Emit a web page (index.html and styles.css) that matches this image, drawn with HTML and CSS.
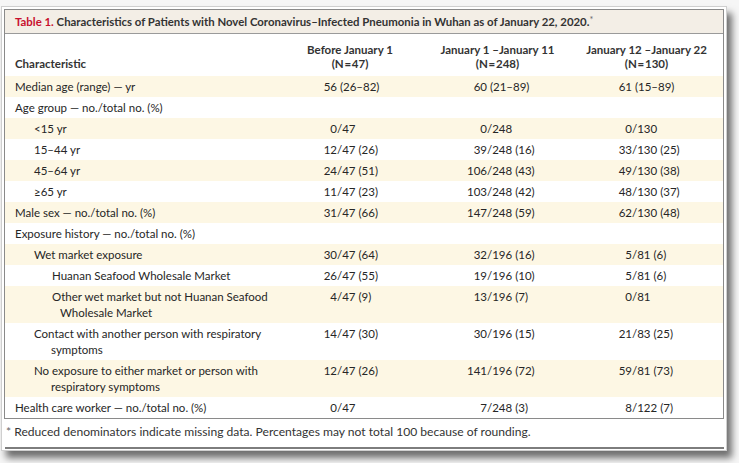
FILE: index.html
```html
<!DOCTYPE html>
<html lang="en">
<head>
<meta charset="utf-8">
<title>Table 1</title>
<link rel="stylesheet" href="styles.css">
</head>
<body>
<div class="card">
  <div class="box">
    <div class="title"><span class="tnum">Table 1.</span> Characteristics of Patients with Novel Coronavirus–Infected Pneumonia in Wuhan as of January 22, 2020.<sup>*</sup></div>
    <table class="data">
      <colgroup>
        <col class="c-label">
        <col class="c-v1">
        <col class="c-v2">
        <col class="c-v3">
      </colgroup>
      <thead>
        <tr>
          <th class="lbl">Characteristic</th>
          <th>Before January 1<br>(N&#8202;=&#8202;47)</th>
          <th>January 1 –January 11<br>(N&#8202;=&#8202;248)</th>
          <th>January 12 –January 22<br>(N&#8202;=&#8202;130)</th>
        </tr>
      </thead>
      <tbody>
        <tr class="alt">
          <td class="l0">Median age (range) — yr</td>
          <td><span class="n">56</span> (26–82)</td>
          <td><span class="n">60</span> (21–89)</td>
          <td><span class="n">61</span> (15–89)</td>
        </tr>
        <tr>
          <td class="l0">Age group — no./total no. (%)</td>
          <td></td><td></td><td></td>
        </tr>
        <tr class="alt">
          <td class="l1">&lt;15 yr</td>
          <td><span class="n">0</span>/47</td>
          <td><span class="n">0</span>/248</td>
          <td><span class="n">0</span>/130</td>
        </tr>
        <tr>
          <td class="l1">15–44 yr</td>
          <td><span class="n">12</span>/47 (26)</td>
          <td><span class="n">39</span>/248 (16)</td>
          <td><span class="n">33</span>/130 (25)</td>
        </tr>
        <tr class="alt">
          <td class="l1">45–64 yr</td>
          <td><span class="n">24</span>/47 (51)</td>
          <td><span class="n">106</span>/248 (43)</td>
          <td><span class="n">49</span>/130 (38)</td>
        </tr>
        <tr>
          <td class="l1">≥65 yr</td>
          <td><span class="n">11</span>/47 (23)</td>
          <td><span class="n">103</span>/248 (42)</td>
          <td><span class="n">48</span>/130 (37)</td>
        </tr>
        <tr class="alt">
          <td class="l0">Male sex — no./total no. (%)</td>
          <td><span class="n">31</span>/47 (66)</td>
          <td><span class="n">147</span>/248 (59)</td>
          <td><span class="n">62</span>/130 (48)</td>
        </tr>
        <tr>
          <td class="l0">Exposure history — no./total no. (%)</td>
          <td></td><td></td><td></td>
        </tr>
        <tr class="alt">
          <td class="l1">Wet market exposure</td>
          <td><span class="n">30</span>/47 (64)</td>
          <td><span class="n">32</span>/196 (16)</td>
          <td><span class="n">5</span>/81 (6)</td>
        </tr>
        <tr>
          <td class="l2">Huanan Seafood Wholesale Market</td>
          <td><span class="n">26</span>/47 (55)</td>
          <td><span class="n">19</span>/196 (10)</td>
          <td><span class="n">5</span>/81 (6)</td>
        </tr>
        <tr class="alt">
          <td class="l2">Other wet market but not Huanan Seafood<br>Wholesale Market</td>
          <td><span class="n">4</span>/47 (9)</td>
          <td><span class="n">13</span>/196 (7)</td>
          <td><span class="n">0</span>/81</td>
        </tr>
        <tr>
          <td class="l1">Contact with another person with respiratory<br>symptoms</td>
          <td><span class="n">14</span>/47 (30)</td>
          <td><span class="n">30</span>/196 (15)</td>
          <td><span class="n">21</span>/83 (25)</td>
        </tr>
        <tr class="alt">
          <td class="l1">No exposure to either market or person with<br>respiratory symptoms</td>
          <td><span class="n">12</span>/47 (26)</td>
          <td><span class="n">141</span>/196 (72)</td>
          <td><span class="n">59</span>/81 (73)</td>
        </tr>
        <tr>
          <td class="l0">Health care worker — no./total no. (%)</td>
          <td><span class="n">0</span>/47</td>
          <td><span class="n">7</span>/248 (3)</td>
          <td><span class="n">8</span>/122 (7)</td>
        </tr>
      </tbody>
    </table>
  </div>
  <div class="foot"><span class="ast">*</span> Reduced denominators indicate missing data. Percentages may not total 100 because of rounding.</div>
</div>
</body>
</html>
```

FILE: styles.css
```css
html, body {
  margin: 0;
  padding: 0;
}
body {
  background: #f6f6f6;
  font-family: "Lato", "Open Sans", sans-serif;
  color: #262626;
  width: 739px;
  height: 463px;
  overflow: hidden;
}
.card {
  margin: 6px 0 0 1px;
  width: 726px;
  box-sizing: border-box;
  background: #fff;
  border: 1px solid #cfcfcf;
  padding: 2px 2px 1px 2px;
  box-shadow: 5px 7px 7px rgba(0, 0, 0, 0.55);
}
.box {
  border: 1px solid #8a8a8a;
}
.title {
  height: 23px;
  line-height: 23px;
  background: #f3eee6;
  border-bottom: 1px solid #9a9a9a;
  padding-left: 10px;
  font-size: 11.4px;
  font-weight: 700;
  color: #333;
  white-space: nowrap;
}
.title .tnum {
  color: #c8102e;
}
.title sup {
  font-size: 9px;
  font-weight: 400;
  color: #666;
  vertical-align: 3px;
  line-height: 0;
}
.data {
  width: 100%;
  table-layout: fixed;
  border-collapse: collapse;
  font-size: 11.5px;
}
.c-label { width: 270px; }
.c-v1 { width: 150px; }
.c-v2 { width: 145px; }
.c-v3 { width: auto; }
.data th {
  font-weight: 700;
  color: #333;
  text-align: center;
  vertical-align: bottom;
  line-height: 14px;
  height: 42px;
  box-sizing: border-box;
  padding: 0 0 5px 0;
}
.data th.lbl {
  text-align: left;
  padding-left: 10px;
}
.data td {
  line-height: 16px;
  padding: 3px 0 2px 0;
  vertical-align: top;
  white-space: nowrap;
}
.data tr.alt td {
  background: #fdf7e4;
}
.data td.l0 { padding-left: 10px; }
.data td.l1 { padding-left: 46px; text-indent: -17px; }
.data td.l2 { padding-left: 55px; text-indent: -8px; }
.data .n {
  display: inline-block;
  width: 62px;
  text-align: right;
  text-indent: 0;
}
.foot {
  font-size: 12.1px;
  line-height: 16px;
  padding: 5px 0 7px 1px;
  margin-left: 1px;
  border-bottom: 2px solid #7d7d7d;
  color: #333;
}
.foot .ast {
  color: #666;
}
```
